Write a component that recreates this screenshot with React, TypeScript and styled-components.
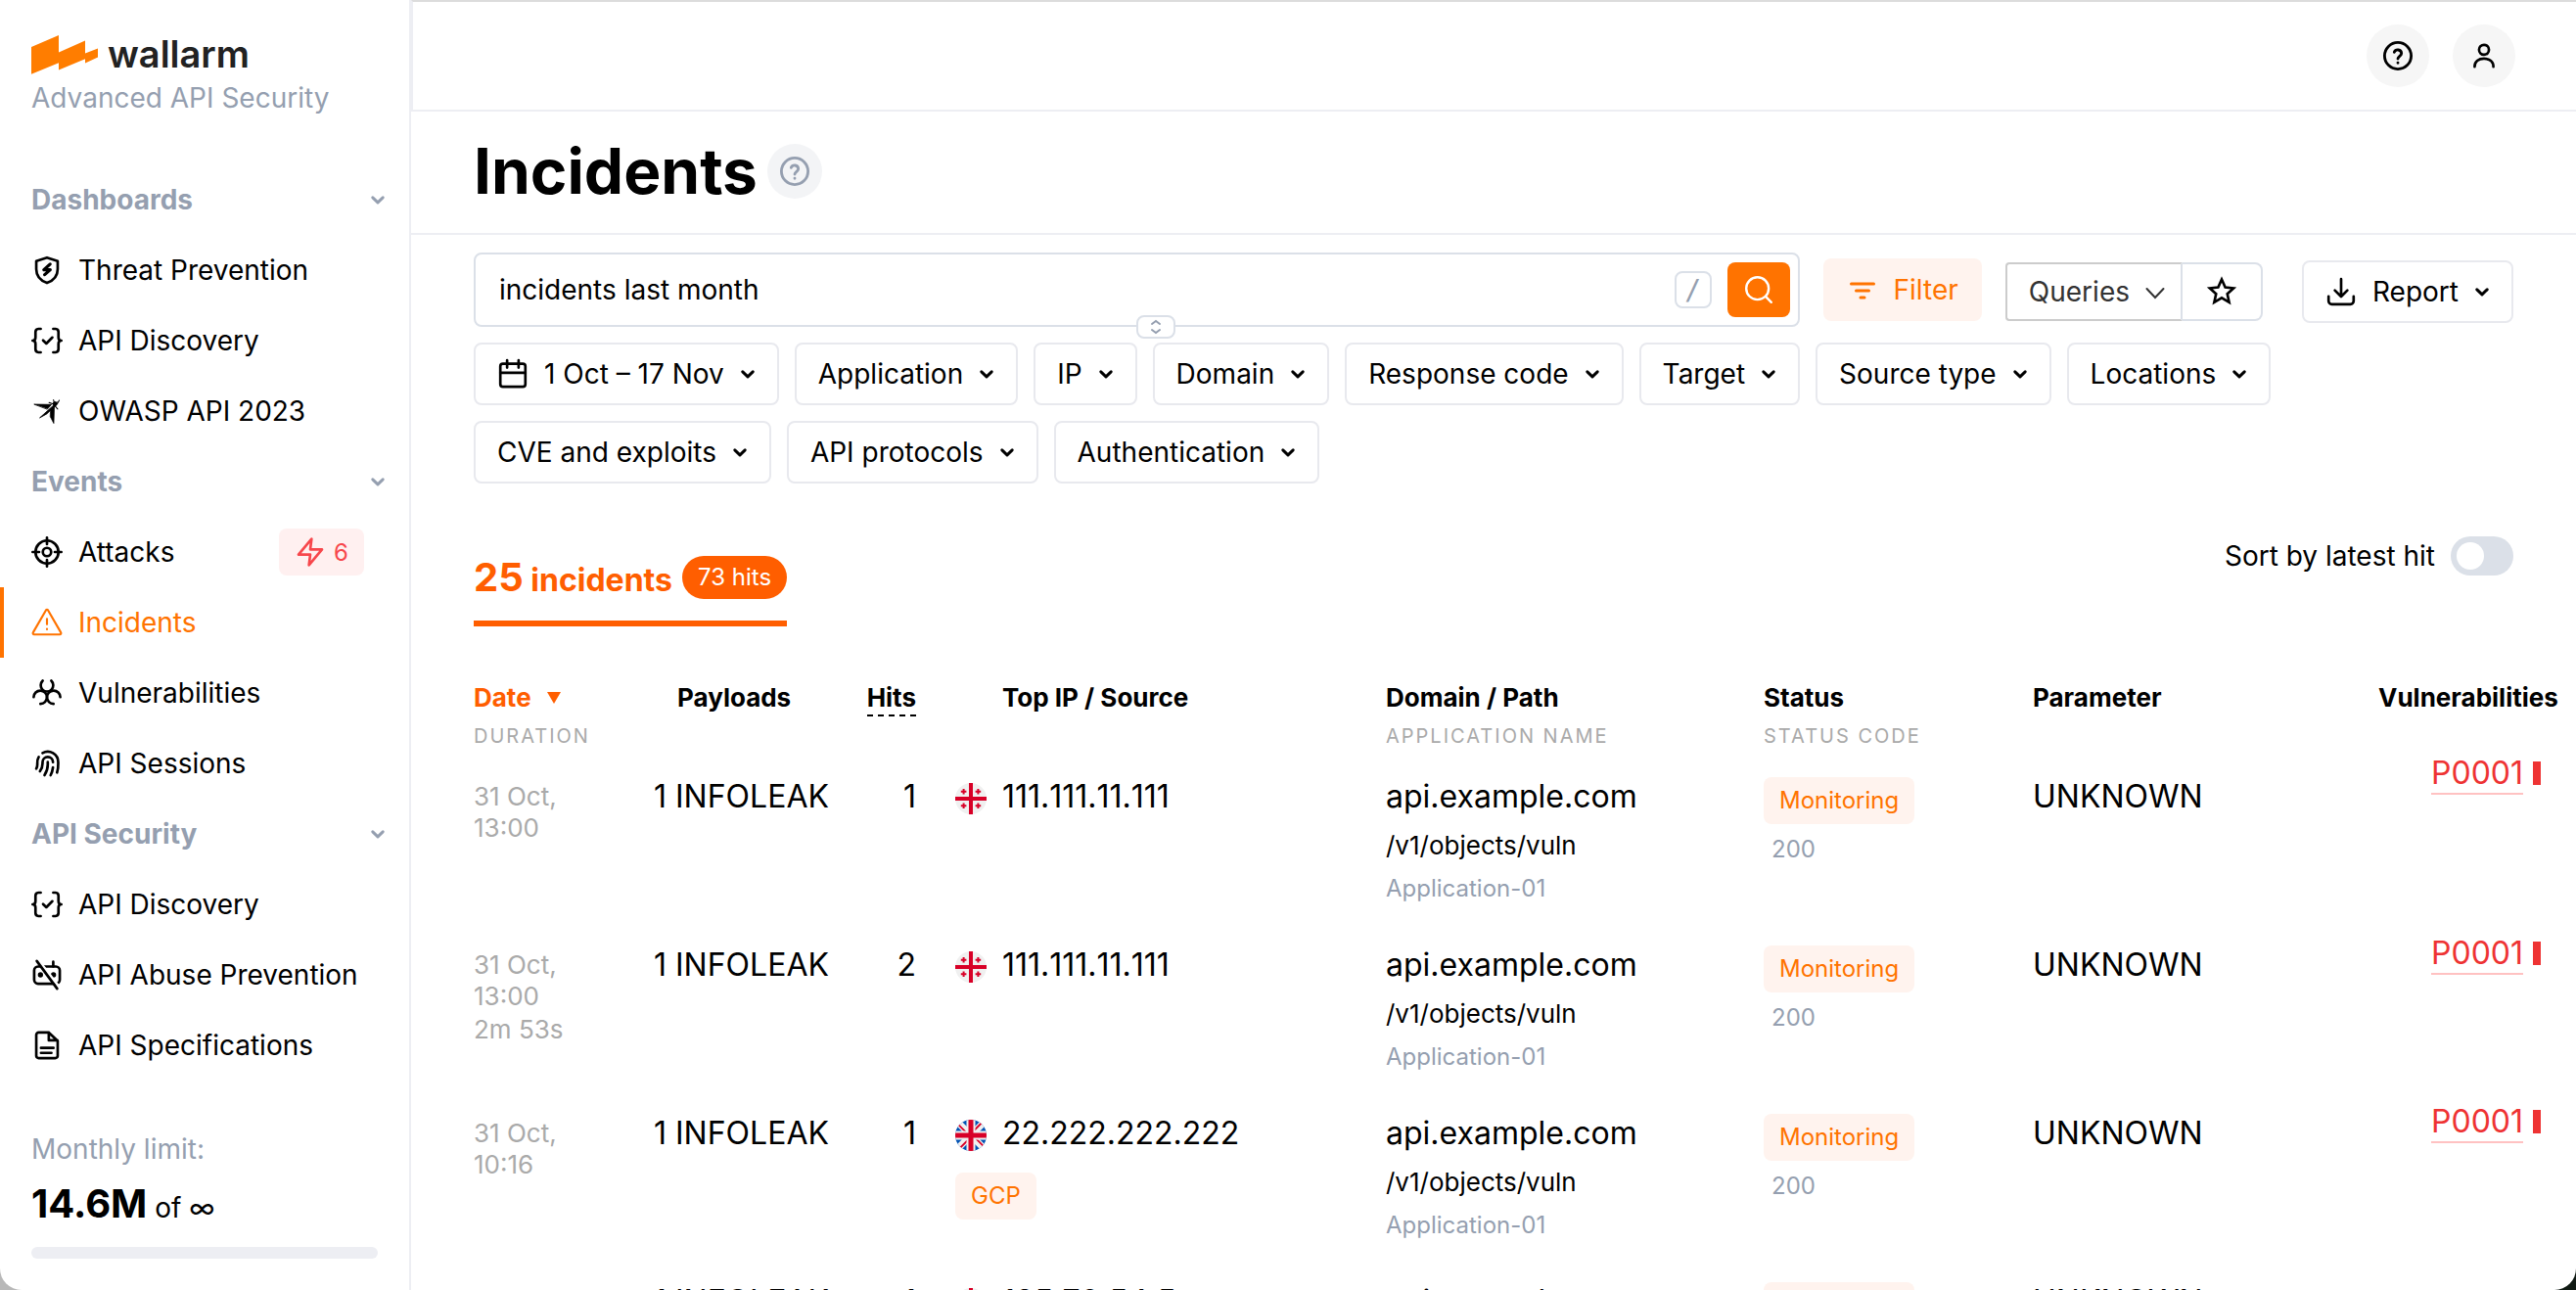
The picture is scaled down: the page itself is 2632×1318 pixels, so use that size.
import React from "react";
import styled, { createGlobalStyle } from "styled-components";

const color = {
  text: "#000000",
  muted: "#959fb0",
  faint: "#aaaaaa",
  line: "#edeef3",
  control: "#e8e9ee",
  field: "#dbe0e8",
  accent: "#ff7300",
  accentDeep: "#ff5e00",
  accentSoft: "#fff3ee",
  danger: "#ee3333",
};

const GlobalStyle = createGlobalStyle`
  *, *::before, *::after { box-sizing: border-box; }
  html, body, #root { height: 100%; }
  body {
    margin: 0;
    background: linear-gradient(90deg, #b8b8b8 50%, #101a14 50%);
    color: ${color.text};
    font-family: Inter, "Liberation Sans", sans-serif;
    font-size: 28px;
    overflow: hidden;
  }
  button, input { font: inherit; color: inherit; margin: 0; }
  button { cursor: pointer; border: 0; background: none; padding: 0; }
  a { color: inherit; text-decoration: none; }
  svg { display: block; flex: none; }
`;

const Shell = styled.div`
  display: grid;
  grid-template-columns: 420px minmax(0, 1fr);
  height: 100vh;
  overflow: hidden;
  background: #ffffff;
  border-radius: 0 0 22px 22px;
`;

/* ---------- Sidebar ---------- */

const Sidebar = styled.aside`
  border-right: 2px solid ${color.line};
  padding-top: 36px;
  overflow: hidden;
`;

const Brand = styled.div`
  padding: 0 32px;
  margin-bottom: 48px;
`;

const LogoRow = styled.a`
  display: flex;
  gap: 10px;
  height: 40px;
  margin-bottom: 4px;
`;

const Wordmark = styled.span`
  color: #222222;
  font-size: 38px;
  font-weight: 600;
  line-height: 38px;
`;

const Tagline = styled.div`
  color: ${color.muted};
  line-height: 40px;
`;

const GroupButton = styled.button`
  display: flex;
  align-items: center;
  justify-content: space-between;
  width: 100%;
  height: 72px;
  padding: 0 20px 0 32px;
  color: ${color.muted};
  font-weight: 700;
`;

const NavList = styled.ul`
  list-style: none;
  margin: 0;
  padding: 0;
`;

const NavLink = styled.a<{ $active?: boolean }>`
  display: flex;
  align-items: center;
  gap: 16px;
  height: 72px;
  padding: 0 46px 0 28px;
  border-left: 4px solid ${(p) => (p.$active ? color.accent : "transparent")};
  color: ${(p) => (p.$active ? color.accent : color.text)};
  white-space: nowrap;
`;

const AlertBadge = styled.span`
  display: flex;
  align-items: center;
  gap: 8px;
  height: 48px;
  margin-left: auto;
  padding: 0 16px;
  border-radius: 8px;
  background: #fff0f0;
  color: #f7474c;
  font-size: 24px;
`;

const Usage = styled.section`
  padding: 50px 32px 0;
`;

const UsageAmount = styled.p`
  height: 56px;
  margin: 8px 0 16px;
  line-height: 56px;
  strong { font-size: 40px; font-weight: 700; }
`;

const UsageTrack = styled.div`
  height: 12px;
  border-radius: 6px;
  background: ${color.line};
`;

/* ---------- Main ---------- */

const Main = styled.main`
  display: flex;
  flex-direction: column;
  min-width: 0;
  overflow: hidden;
`;

const TopBar = styled.header`
  display: flex;
  align-items: center;
  justify-content: flex-end;
  gap: 24px;
  flex: none;
  height: 114px;
  padding-right: 62px;
  border-top: 2px solid #dcdcdc;
  border-bottom: 2px solid ${color.line};
  border-left: 2px solid ${color.line};
`;

const RoundButton = styled.button<{ $quiet?: boolean }>`
  display: grid;
  place-items: center;
  width: ${(p) => (p.$quiet ? 56 : 64)}px;
  height: ${(p) => (p.$quiet ? 56 : 64)}px;
  border-radius: 50%;
  background: ${(p) => (p.$quiet ? "#f3f4f6" : "#f6f6f6")};
  color: ${(p) => (p.$quiet ? color.muted : color.text)};
`;

const TitleBar = styled.div`
  display: flex;
  align-items: center;
  gap: 10px;
  flex: none;
  padding: 29px 64px 31px;
  border-bottom: 2px solid ${color.line};
`;

const Title = styled.h1`
  margin: 0;
  font-size: 64px;
  font-weight: 700;
  line-height: 64px;
`;

const Content = styled.div`
  padding: 18px 0 0 64px;
`;

const SearchRow = styled.form`
  display: flex;
  align-items: center;
  gap: 24px;
  padding-right: 64px;
  margin-bottom: 16px;
`;

const SearchBox = styled.div`
  position: relative;
  display: flex;
  align-items: center;
  flex: 1;
  min-width: 0;
  height: 76px;
  padding: 0 8px 0 24px;
  border: 2px solid ${color.field};
  border-radius: 8px;
`;

const SearchInput = styled.input`
  flex: 1;
  min-width: 0;
  padding: 0;
  border: 0;
  outline: 0;
  background: none;
`;

const KeyHint = styled.kbd`
  display: grid;
  place-items: center;
  width: 38px;
  height: 38px;
  margin-right: 16px;
  border: 2px solid ${color.field};
  border-radius: 8px;
  color: ${color.muted};
`;

const SearchButton = styled.button`
  display: grid;
  place-items: center;
  width: 64px;
  height: 56px;
  border-radius: 8px;
  background: ${color.accent};
  color: #ffffff;
`;

const ResizeHandle = styled.button`
  position: absolute;
  left: 50%;
  bottom: -14px;
  display: grid;
  place-items: center;
  width: 40px;
  height: 24px;
  border: 2px solid ${color.field};
  border-radius: 8px;
  background: #ffffff;
  color: ${color.muted};
`;

const FilterButton = styled.button`
  display: flex;
  align-items: center;
  gap: 16px;
  height: 64px;
  padding: 0 24px;
  border-radius: 8px;
  background: ${color.accentSoft};
  color: ${color.accent};
`;

const Actions = styled.div`
  display: flex;
  align-items: center;
  gap: 40px;
  padding-top: 4px;
`;

const Split = styled.div`
  display: flex;
`;

const QueriesButton = styled.button`
  display: flex;
  align-items: center;
  gap: 14px;
  height: 60px;
  padding: 0 14px 0 22px;
  border: 2px solid #cccccc;
  border-right-color: ${color.field};
  border-radius: 4px 0 0 4px;
  color: #333333;
`;

const StarButton = styled.button`
  display: grid;
  place-items: center;
  width: 82px;
  height: 60px;
  border: 2px solid ${color.field};
  border-left: 0;
  border-radius: 0 8px 8px 0;
`;

const OutlineButton = styled.button`
  display: flex;
  align-items: center;
  gap: 12px;
  height: 64px;
  padding: 0 18px 0 22px;
  border: 2px solid ${color.control};
  border-radius: 8px;
  background: #ffffff;
  white-space: nowrap;
`;

const LeadIcon = styled.span`
  margin-right: 4px;
`;

const Chips = styled.div`
  display: flex;
  flex-wrap: wrap;
  gap: 16px;
  max-width: 1900px;
`;

const Summary = styled.div`
  display: flex;
  align-items: flex-start;
  justify-content: space-between;
  margin: 54px 64px 56px 0;
`;

const CountTab = styled.h2`
  display: flex;
  align-items: center;
  gap: 10px;
  margin: 20px 0 0;
  padding-bottom: 22px;
  border-bottom: 6px solid ${color.accentDeep};
  color: ${color.accentDeep};
  font-size: 32px;
  font-weight: 700;
  line-height: 44px;
`;

const CountText = styled.span`
  height: 44px;
  strong { font-size: 40px; font-weight: 700; }
`;

const HitsPill = styled.span`
  padding: 0 16px;
  border-radius: 22px;
  background: ${color.accentDeep};
  color: #ffffff;
  font-size: 24px;
  font-weight: 400;
`;

const SortLabel = styled.label`
  display: flex;
  align-items: center;
  gap: 16px;
`;

const Toggle = styled.input`
  appearance: none;
  display: flex;
  align-items: center;
  width: 64px;
  height: 40px;
  padding: 0 6px;
  border-radius: 20px;
  background: ${color.field};
  &::before {
    content: "";
    width: 28px;
    height: 28px;
    border-radius: 50%;
    background: #ffffff;
  }
`;

/* ---------- Table ---------- */

const Table = styled.table`
  width: 100%;
  table-layout: fixed;
  border-collapse: collapse;
`;

const Col = styled.col<{ $width?: number }>`
  width: ${(p) => (p.$width ? `${p.$width}px` : "auto")};
`;

const Th = styled.th<{ $indent?: number; $end?: boolean; $on?: boolean }>`
  padding: 0 0 4px ${(p) => p.$indent ?? 0}px;
  color: ${(p) => (p.$on ? color.accentDeep : color.text)};
  font-size: 26px;
  font-weight: 700;
  line-height: 34px;
  text-align: ${(p) => (p.$end ? "right" : "left")};
  vertical-align: top;
  white-space: nowrap;
`;

const SortButton = styled.button`
  display: flex;
  align-items: center;
  gap: 16px;
  height: 34px;
  font-weight: 700;
`;

const Dashed = styled.span`
  display: inline-block;
  border-bottom: 2px dashed ${color.text};
`;

const SubHead = styled.div`
  margin-top: 8px;
  color: ${color.faint};
  font-size: 20px;
  font-weight: 400;
  letter-spacing: 2px;
  line-height: 28px;
`;

const Td = styled.td<{ $indent?: number; $end?: boolean }>`
  padding: 24px 0 12px ${(p) => p.$indent ?? 0}px;
  font-size: 32px;
  line-height: 40px;
  text-align: ${(p) => (p.$end ? "right" : "left")};
  vertical-align: top;
  white-space: nowrap;
`;

const VulnTd = styled(Td)`
  padding-top: 0;
  tr + tr > & { padding-top: 12px; }
`;

const DateText = styled.div`
  width: 104px;
  padding-top: 4px;
  color: ${color.faint};
  font-size: 26px;
  line-height: 32px;
  white-space: normal;
`;

const Duration = styled.div`
  margin-top: 2px;
`;

const Source = styled.div`
  display: flex;
  align-items: center;
  gap: 16px;
  height: 40px;
  margin-bottom: 20px;
  font-kerning: none;
  svg { margin-top: 4px; }
`;

const Path = styled.div`
  margin-top: 8px;
  font-size: 26px;
  line-height: 44px;
`;

const AppName = styled.div`
  color: ${color.muted};
  font-size: 24px;
  line-height: 44px;
`;

const Tag = styled.div`
  width: fit-content;
  padding: 0 16px;
  border-radius: 8px;
  background: ${color.accentSoft};
  color: ${color.accent};
  font-size: 24px;
  line-height: 48px;
`;

const StatusCode = styled.div`
  margin-top: 4px;
  padding-left: 8px;
  color: ${color.muted};
  font-size: 24px;
  line-height: 44px;
`;

const Vuln = styled.div`
  display: flex;
  align-items: flex-start;
  gap: 10px;
  color: ${color.danger};
`;

const VulnLink = styled.a`
  border-bottom: 2px solid #ffc2c2;
`;

const Severity = styled.span`
  width: 8px;
  height: 24px;
  margin-top: 8px;
  background: ${color.danger};
`;

/* ---------- Icons ---------- */

type IconProps = { size?: number; stroke?: number; children: React.ReactNode };

const Icon = ({ size = 32, stroke = 2, children }: IconProps) => (
  <svg
    width={size}
    height={size}
    viewBox="0 0 24 24"
    fill="none"
    stroke="currentColor"
    strokeWidth={stroke}
    strokeLinecap="round"
    strokeLinejoin="round"
    aria-hidden="true"
  >
    {children}
  </svg>
);

const Chevron = () => (
  <svg width="24" height="24" viewBox="0 0 24 24" fill="none" stroke="currentColor" strokeWidth="3" strokeLinecap="round" strokeLinejoin="round" aria-hidden="true">
    <path d="M6.8 9.8 12 14.8l5.2-5" />
  </svg>
);

const ShieldIcon = () => (
  <Icon>
    <path d="M12 2.4 20.2 5v6.2c0 5-3.3 8.8-8.2 10.6-4.9-1.8-8.2-5.6-8.2-10.6V5z" />
    <path d="M14.4 7.4 9.6 11.7h4.9l-4.3 3.8" strokeWidth="2.4" />
  </Icon>
);

const BracesIcon = () => (
  <Icon>
    <path d="M7.2 3H5.4A2.4 2.4 0 0 0 3.2 5.4v4.2C3.2 11 2.6 12 1 12c1.6 0 2.2 1 2.2 2.4v4.2A2.4 2.4 0 0 0 5.4 21h1.8" />
    <path d="M16.8 3h1.8a2.4 2.4 0 0 1 2.2 2.4v4.2c0 1.4.6 2.4 2.2 2.4-1.6 0-2.2 1-2.2 2.4v4.2a2.4 2.4 0 0 1-2.2 2.4h-1.8" />
    <path d="m9 11.8 2.5 2.4 4.6-4.6" />
  </Icon>
);

const WaspIcon = () => (
  <Icon stroke={0.6}>
    <path d="M2.4 6.8 15.4 7l-3 3.4z" fill="currentColor" />
    <path d="M19.6 5.2 6.4 17.2l5.4-3 6.4-6z" fill="currentColor" />
    <path d="m15 10.4 2.6-1.6-.4 12.6-2.6-5z" fill="currentColor" />
    <path d="m13.6 5.4 3.6 1.4m-.2-3.4.8 3m2.2-.2 1.4-2.4M18 8l2.2 2.4" strokeWidth="0.8" />
    <circle cx="18.2" cy="6.4" r="1.6" fill="currentColor" />
  </Icon>
);

const CrosshairIcon = () => (
  <Icon>
    <circle cx="12" cy="12" r="8.8" />
    <circle cx="12" cy="12" r="3.2" />
    <path d="M12 1v5M12 18v5M1 12h5M18 12h5" />
  </Icon>
);

const WarningIcon = () => (
  <Icon stroke={1.6}>
    <path d="M11.2 2.6a1 1 0 0 1 1.6 0l9.8 17a1 1 0 0 1-.8 1.6H2.2a1 1 0 0 1-.8-1.6z" />
    <path d="M12 9.2v4.2M12 17v.2" />
  </Icon>
);

const BiohazardIcon = () => (
  <Icon>
    <path d="M8.7 2.6a4.8 4.8 0 1 0 6.6 0" />
    <path d="M1.8 15.2A5.1 5.1 0 1 1 7 20.4" />
    <path d="M22.2 15.2A5.1 5.1 0 1 0 17 20.4" />
  </Icon>
);

const FingerprintIcon = () => (
  <Icon>
    <g transform="translate(24.6) scale(-1 1)">
      <path d="M18.9 7a8 8 0 0 1 1.1 5v1a6 6 0 0 0 .8 3" />
      <path d="M8 11a4 4 0 0 1 8 0v1a10 10 0 0 0 2 6" />
      <path d="M12 11v2a14 14 0 0 0 2.5 8" />
      <path d="M8 15a18 18 0 0 0 1.8 6" />
      <path d="M4.9 19a22 22 0 0 1-.9-7v-1a8 8 0 0 1 12-6.95" />
    </g>
  </Icon>
);

const BotOffIcon = () => (
  <Icon>
    <rect x="2.2" y="5.6" width="19.6" height="13.2" rx="3" />
    <path d="M16.8 2v3.6" />
    <circle cx="7" cy="12" r="1.3" fill="currentColor" strokeWidth="1.4" />
    <circle cx="17" cy="12" r="1.3" fill="currentColor" strokeWidth="1.4" />
    <path d="M6 1.4 22.6 23" stroke="#ffffff" />
    <path d="M4.2 1.4 19.8 22.6" />
  </Icon>
);

const FileIcon = () => (
  <Icon>
    <path d="M13.4 2.2H5.6a1.8 1.8 0 0 0-1.8 1.8v16a1.8 1.8 0 0 0 1.8 1.8h12.8a1.8 1.8 0 0 0 1.8-1.8V8.6zV8.2h6.6" />
    <path d="M7.4 14h9.6M7.4 17.8h8" />
  </Icon>
);

const BoltIcon = () => (
  <Icon>
    <path d="M13 2 3 14h9l-1 8 10-12h-9z" />
  </Icon>
);

const HelpIcon = () => (
  <Icon size={34}>
    <circle cx="12" cy="12" r="9.6" />
    <path d="M9.4 9.4a2.7 2.7 0 0 1 5.2.9c0 1.8-2.6 2.1-2.6 3.9M12 17v.2" />
  </Icon>
);

const UserIcon = () => (
  <Icon>
    <circle cx="12" cy="7.4" r="3.8" />
    <path d="M4.8 20.4c0-4 3-6.2 7.2-6.2s7.2 2.2 7.2 6.2" />
  </Icon>
);

const SearchIcon = () => (
  <Icon stroke={1.8}>
    <circle cx="11" cy="11" r="8.6" />
    <path d="m17.6 17.6 4 4" />
  </Icon>
);

const FilterIcon = () => (
  <svg width="32" height="32" viewBox="0 0 32 32" fill="none" stroke="currentColor" strokeWidth="3" strokeLinecap="round" aria-hidden="true">
    <path d="M4.5 10h23M9.5 17h13M14 24h4" />
  </svg>
);

const ThinChevron = () => (
  <svg width="24" height="24" viewBox="0 0 24 24" fill="none" stroke="currentColor" strokeWidth="2" strokeLinecap="round" aria-hidden="true">
    <path d="m3.5 9 8.5 9 8.5-9" />
  </svg>
);

const StarIcon = () => (
  <Icon>
    <path strokeLinejoin="miter" d="m12 2.6 2.7 6 6.4.7-4.8 4.4 1.4 6.4-5.7-3.3-5.7 3.3 1.4-6.4-4.8-4.4 6.4-.7z" />
  </Icon>
);

const DownloadIcon = () => (
  <Icon>
    <path d="M12 2.4v13.2M7.2 11l4.8 4.8 4.8-4.8M2.4 15.6v3.6a2.4 2.4 0 0 0 2.4 2.4h14.4a2.4 2.4 0 0 0 2.4-2.4v-3.6" />
  </Icon>
);

const CalendarIcon = () => (
  <Icon>
    <rect x="2.4" y="4.2" width="19.2" height="17.6" rx="2" />
    <path d="M2.4 11.2h19.2M7.6 1.6v5.6M16.4 1.6v5.6" />
  </Icon>
);

const ResizeIcon = () => (
  <svg width="12" height="16" viewBox="0 0 12 16" fill="none" stroke="currentColor" strokeWidth="2" strokeLinecap="round" aria-hidden="true">
    <path d="m2 5 4-3 4 3M2 11l4 3 4-3" />
  </svg>
);

const LogoMark = () => (
  <svg width="68" height="40" viewBox="0 0 68 40" fill="#ff7d00" aria-hidden="true">
    <path d="M0 12 28 0v17.4L55 5.4v13.2L68 13.4v9.2L55 28.4v-4.2L28 35.4v-7.2L0 39.8z" />
  </svg>
);

const FlagGeorgia = () => (
  <svg width="32" height="32" viewBox="0 0 32 32" role="img" aria-label="Georgia">
    <circle cx="16" cy="16" r="16" fill="#f0f0f0" />
    <path d="M14 0h4v14h14v4H18v14h-4V18H0v-4h14z" fill="#d80027" />
    <path
      d="M8.6 6v5.6M5.8 8.8h5.6M23.4 6v5.6M20.6 8.8h5.6M8.6 20.4V26M5.8 23.2h5.6M23.4 20.4V26M20.6 23.2h5.6"
      stroke="#d80027"
      strokeWidth="2"
    />
  </svg>
);

const FlagUK = () => (
  <svg width="32" height="32" viewBox="0 0 32 32" role="img" aria-label="United Kingdom">
    <clipPath id="flag-disc">
      <circle cx="16" cy="16" r="16" />
    </clipPath>
    <g clipPath="url(#flag-disc)">
      <path fill="#0052b4" d="M0 0h32v32H0z" />
      <path d="m0 0 32 32M32 0 0 32" stroke="#f0f0f0" strokeWidth="7" />
      <path d="m0 1.8 15 15M32 30.2l-15-15M30.2 0l-15 15M1.8 32l15-15" stroke="#d80027" strokeWidth="1.8" />
      <path d="M16 0v32M0 16h32" stroke="#f0f0f0" strokeWidth="9" />
      <path d="M16 0v32M0 16h32" stroke="#d80027" strokeWidth="5" />
    </g>
  </svg>
);

/* ---------- Data ---------- */

type NavItem = { label: string; icon: React.ReactNode; active?: boolean; alerts?: number };

const navigation: { title: string; items: NavItem[] }[] = [
  {
    title: "Dashboards",
    items: [
      { label: "Threat Prevention", icon: <ShieldIcon /> },
      { label: "API Discovery", icon: <BracesIcon /> },
      { label: "OWASP API 2023", icon: <WaspIcon /> },
    ],
  },
  {
    title: "Events",
    items: [
      { label: "Attacks", icon: <CrosshairIcon />, alerts: 6 },
      { label: "Incidents", icon: <WarningIcon />, active: true },
      { label: "Vulnerabilities", icon: <BiohazardIcon /> },
      { label: "API Sessions", icon: <FingerprintIcon /> },
    ],
  },
  {
    title: "API Security",
    items: [
      { label: "API Discovery", icon: <BracesIcon /> },
      { label: "API Abuse Prevention", icon: <BotOffIcon /> },
      { label: "API Specifications", icon: <FileIcon /> },
    ],
  },
];

const filters = [
  "Application",
  "IP",
  "Domain",
  "Response code",
  "Target",
  "Source type",
  "Locations",
  "CVE and exploits",
  "API protocols",
  "Authentication",
];

type Incident = {
  date: string;
  duration?: string;
  hits: number;
  flag: "ge" | "gb";
  ip: string;
  source?: string;
  vuln?: string;
};

const incidents: Incident[] = [
  { date: "31 Oct, 13:00", hits: 1, flag: "ge", ip: "111.111.11.111", vuln: "P0001" },
  { date: "31 Oct, 13:00", duration: "2m 53s", hits: 2, flag: "ge", ip: "111.111.11.111", vuln: "P0001" },
  { date: "31 Oct, 10:16", hits: 1, flag: "gb", ip: "22.222.222.222", source: "GCP", vuln: "P0001" },
  { date: "31 Oct, 10:02", hits: 1, flag: "ge", ip: "185.70.54.5" },
];

const columns = [184, 200, 68, 480, 386, 275, undefined, 202];

/* ---------- App ---------- */

export default function App() {
  return (
    <>
      <GlobalStyle />
      <Shell>
        <Sidebar>
          <Brand>
            <LogoRow href="#">
              <LogoMark />
              <Wordmark>wallarm</Wordmark>
            </LogoRow>
            <Tagline>Advanced API Security</Tagline>
          </Brand>
          <nav>
            {navigation.map((group) => (
              <div key={group.title}>
                <GroupButton type="button" aria-expanded="true">
                  {group.title}
                  <Chevron />
                </GroupButton>
                <NavList>
                  {group.items.map((item) => (
                    <li key={item.label}>
                      <NavLink href="#" $active={item.active} aria-current={item.active ? "page" : undefined}>
                        {item.icon}
                        {item.label}
                        {item.alerts && (
                          <AlertBadge>
                            <BoltIcon />
                            {item.alerts}
                          </AlertBadge>
                        )}
                      </NavLink>
                    </li>
                  ))}
                </NavList>
              </div>
            ))}
          </nav>
          <Usage>
            <Tagline>Monthly limit:</Tagline>
            <UsageAmount>
              <strong>14.6M</strong> of ∞
            </UsageAmount>
            <UsageTrack role="progressbar" aria-label="Monthly usage" aria-valuenow={0} />
          </Usage>
        </Sidebar>

        <Main>
          <TopBar>
            <RoundButton type="button" aria-label="Help">
              <HelpIcon />
            </RoundButton>
            <RoundButton type="button" aria-label="Account">
              <UserIcon />
            </RoundButton>
          </TopBar>

          <TitleBar>
            <Title>Incidents</Title>
            <RoundButton type="button" $quiet aria-label="About incidents">
              <HelpIcon />
            </RoundButton>
          </TitleBar>

          <Content>
            <SearchRow onSubmit={(e) => e.preventDefault()}>
              <SearchBox>
                <SearchInput aria-label="Search" defaultValue="incidents last month" />
                <KeyHint>/</KeyHint>
                <SearchButton type="submit" aria-label="Run search">
                  <SearchIcon />
                </SearchButton>
                <ResizeHandle type="button" aria-label="Resize search field">
                  <ResizeIcon />
                </ResizeHandle>
              </SearchBox>
              <FilterButton type="button">
                <FilterIcon />
                Filter
              </FilterButton>
              <Actions>
                <Split>
                  <QueriesButton type="button" aria-haspopup="menu">
                    Queries
                    <ThinChevron />
                  </QueriesButton>
                  <StarButton type="button" aria-label="Save query">
                    <StarIcon />
                  </StarButton>
                </Split>
                <OutlineButton type="button" aria-haspopup="menu">
                  <LeadIcon>
                    <DownloadIcon />
                  </LeadIcon>
                  Report
                  <Chevron />
                </OutlineButton>
              </Actions>
            </SearchRow>

            <Chips>
              <OutlineButton type="button" aria-haspopup="dialog">
                <LeadIcon>
                  <CalendarIcon />
                </LeadIcon>
                1 Oct – 17 Nov
                <Chevron />
              </OutlineButton>
              {filters.map((name) => (
                <OutlineButton key={name} type="button" aria-haspopup="menu">
                  {name}
                  <Chevron />
                </OutlineButton>
              ))}
            </Chips>

            <Summary>
              <CountTab>
                <CountText>
                  <strong>25</strong> incidents
                </CountText>
                <HitsPill>73 hits</HitsPill>
              </CountTab>
              <SortLabel>
                Sort by latest hit
                <Toggle type="checkbox" role="switch" />
              </SortLabel>
            </Summary>

            <Table>
              <colgroup>
                {columns.map((width, i) => (
                  <Col key={i} $width={width} />
                ))}
              </colgroup>
              <thead>
                <tr>
                  <Th $on>
                    <SortButton type="button">
                      Date
                      <svg width="14" height="12" viewBox="0 0 14 12" fill="currentColor" aria-hidden="true">
                        <path d="M0 0h14L7 12z" />
                      </svg>
                    </SortButton>
                    <SubHead>DURATION</SubHead>
                  </Th>
                  <Th $indent={24}>Payloads</Th>
                  <Th $end>
                    <Dashed>Hits</Dashed>
                  </Th>
                  <Th $indent={88}>Top IP / Source</Th>
                  <Th>
                    Domain / Path
                    <SubHead>APPLICATION NAME</SubHead>
                  </Th>
                  <Th>
                    Status
                    <SubHead>STATUS CODE</SubHead>
                  </Th>
                  <Th>Parameter</Th>
                  <Th>Vulnerabilities</Th>
                </tr>
              </thead>
              <tbody>
                {incidents.map((row, i) => (
                  <tr key={i}>
                    <Td>
                      <DateText>
                        {row.date}
                        {row.duration && <Duration>{row.duration}</Duration>}
                      </DateText>
                    </Td>
                    <Td>1 INFOLEAK</Td>
                    <Td $end>{row.hits}</Td>
                    <Td $indent={40}>
                      <Source>
                        {row.flag === "ge" ? <FlagGeorgia /> : <FlagUK />}
                        <span>{row.ip}</span>
                      </Source>
                      {row.source && <Tag>{row.source}</Tag>}
                    </Td>
                    <Td>
                      api.example.com
                      <Path>/v1/objects/vuln</Path>
                      <AppName>Application-01</AppName>
                    </Td>
                    <Td>
                      <Tag>Monitoring</Tag>
                      <StatusCode>200</StatusCode>
                    </Td>
                    <Td>UNKNOWN</Td>
                    <VulnTd $indent={54}>
                      {row.vuln && (
                        <Vuln>
                          <VulnLink href="#">{row.vuln}</VulnLink>
                          <Severity />
                        </Vuln>
                      )}
                    </VulnTd>
                  </tr>
                ))}
              </tbody>
            </Table>
          </Content>
        </Main>
      </Shell>
    </>
  );
}
